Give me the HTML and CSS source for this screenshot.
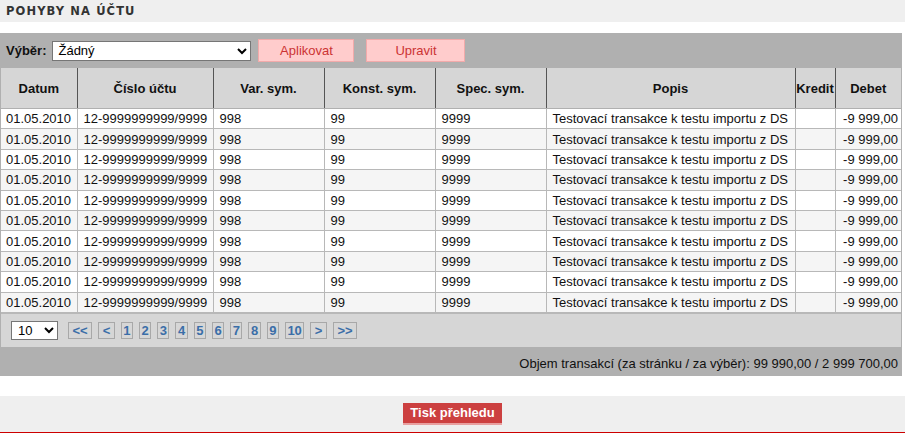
FILE: index.html
```html
<!DOCTYPE html>
<html lang="cs">
<head>
<meta charset="utf-8">
<title>Pohyby na účtu</title>
<link rel="stylesheet" href="styles.css">
</head>
<body>
<div class="page">
  <div class="titlebar"><h2 class="title">POHYBY NA ÚČTU</h2></div>
  <div class="panel">
    <div class="toolbar">
      <label class="tb-label" for="vyber">Výběr:</label>
      <select id="vyber" class="tb-select"><option>Žádný</option></select>
      <button class="btn-pink btn-apply">Aplikovat</button>
      <button class="btn-pink btn-edit">Upravit</button>
    </div>
    <table class="grid">
      <colgroup>
        <col class="c-date"><col class="c-acc"><col class="c-sym"><col class="c-sym"><col class="c-sym"><col class="c-desc"><col class="c-cred"><col class="c-deb">
      </colgroup>
      <thead>
        <tr><th>Datum</th><th>Číslo účtu</th><th>Var. sym.</th><th>Konst. sym.</th><th>Spec. sym.</th><th>Popis</th><th class="th-narrow">Kredit</th><th>Debet</th></tr>
      </thead>
      <tbody>
        <tr><td>01.05.2010</td><td>12-9999999999/9999</td><td>998</td><td>99</td><td>9999</td><td>Testovací transakce k testu importu z DS</td><td></td><td class="num">-9 999,00</td></tr>
        <tr><td>01.05.2010</td><td>12-9999999999/9999</td><td>998</td><td>99</td><td>9999</td><td>Testovací transakce k testu importu z DS</td><td></td><td class="num">-9 999,00</td></tr>
        <tr><td>01.05.2010</td><td>12-9999999999/9999</td><td>998</td><td>99</td><td>9999</td><td>Testovací transakce k testu importu z DS</td><td></td><td class="num">-9 999,00</td></tr>
        <tr><td>01.05.2010</td><td>12-9999999999/9999</td><td>998</td><td>99</td><td>9999</td><td>Testovací transakce k testu importu z DS</td><td></td><td class="num">-9 999,00</td></tr>
        <tr><td>01.05.2010</td><td>12-9999999999/9999</td><td>998</td><td>99</td><td>9999</td><td>Testovací transakce k testu importu z DS</td><td></td><td class="num">-9 999,00</td></tr>
        <tr><td>01.05.2010</td><td>12-9999999999/9999</td><td>998</td><td>99</td><td>9999</td><td>Testovací transakce k testu importu z DS</td><td></td><td class="num">-9 999,00</td></tr>
        <tr><td>01.05.2010</td><td>12-9999999999/9999</td><td>998</td><td>99</td><td>9999</td><td>Testovací transakce k testu importu z DS</td><td></td><td class="num">-9 999,00</td></tr>
        <tr><td>01.05.2010</td><td>12-9999999999/9999</td><td>998</td><td>99</td><td>9999</td><td>Testovací transakce k testu importu z DS</td><td></td><td class="num">-9 999,00</td></tr>
        <tr><td>01.05.2010</td><td>12-9999999999/9999</td><td>998</td><td>99</td><td>9999</td><td>Testovací transakce k testu importu z DS</td><td></td><td class="num">-9 999,00</td></tr>
        <tr><td>01.05.2010</td><td>12-9999999999/9999</td><td>998</td><td>99</td><td>9999</td><td>Testovací transakce k testu importu z DS</td><td></td><td class="num">-9 999,00</td></tr>
      </tbody>
    </table>
    <div class="pager">
      <select class="pg-select"><option>10</option></select>
      <div class="pg-links">
        <a class="pg pg-arrow">&lt;&lt;</a><a class="pg pg-arrow">&lt;</a><a class="pg">1</a><a class="pg">2</a><a class="pg">3</a><a class="pg">4</a><a class="pg">5</a><a class="pg">6</a><a class="pg">7</a><a class="pg">8</a><a class="pg">9</a><a class="pg">10</a><a class="pg pg-arrow">&gt;</a><a class="pg pg-arrow">&gt;&gt;</a>
      </div>
    </div>
    <div class="summary">Objem transakcí (za stránku / za výběr): 99 990,00 / 2 999 700,00</div>
  </div>
  <div class="gap"></div>
  <div class="actions"><button class="btn-red">Tisk přehledu</button></div>
</div>
</body>
</html>
```
FILE: styles.css
```css
html, body {
  margin: 0;
  padding: 0;
  background: #ffffff;
}
body {
  font-family: "Liberation Sans", Arial, sans-serif;
  font-size: 13px;
  color: #111;
}
.page {
  width: 905px;
}
.titlebar {
  background: #efefef;
  height: 22px;
  display: flex;
  align-items: center;
  padding-left: 6px;
  margin-bottom: 11px;
}
.title {
  margin: 0;
  font-family: "DejaVu Sans", Verdana, sans-serif;
  font-size: 11.5px;
  font-weight: bold;
  letter-spacing: 1.1px;
  color: #333;
}
.panel {
  width: 902px;
  background: #b0b0b0;
  box-sizing: border-box;
  padding: 0 1px;
}
.toolbar {
  height: 35px;
  display: flex;
  align-items: center;
  padding-left: 5px;
}
.tb-label {
  font-weight: bold;
  margin-right: 6px;
}
.tb-select {
  width: 199px;
  height: 20px;
  font-family: "Liberation Sans", Arial, sans-serif;
  font-size: 13px;
  margin: 0 7px 0 0;
  padding: 0 1px;
  border: 1px solid #767676;
  border-radius: 0;
  background: #fff;
  color: #000;
}
.btn-pink {
  height: 23px;
  background: #ffcccc;
  border: 1px solid #f2aaaa;
  color: #cc3333;
  font-family: "Liberation Sans", Arial, sans-serif;
  font-size: 13px;
  padding: 0;
  margin: 0;
}
.btn-apply { width: 96px; margin-right: 12px; }
.btn-edit { width: 99px; }
.grid {
  width: 900px;
  table-layout: fixed;
  border-collapse: collapse;
  background: #fff;
}
.c-date { width: 76px; }
.c-acc { width: 136px; }
.c-sym { width: 111px; }
.c-desc { width: 249px; }
.c-cred { width: 40px; }
.c-deb { width: 66px; }
.grid th {
  background: #d6d6d6;
  height: 40px;
  padding: 0;
  font-weight: bold;
  text-align: center;
  border-left: 1px solid #555;
  border-bottom: 1px solid #b0b0b0;
  white-space: nowrap;
  overflow: hidden;
}
.grid th:first-child { border-left: 0; }
.grid td {
  height: 19.4px;
  line-height: 15px;
  padding: 0 3px 0 5px;
  border: 1px solid #b8b8b8;
  white-space: nowrap;
  overflow: hidden;
}
.grid td:first-child { border-left: 0; }
.grid td:last-child { border-right: 0; }
.grid td + td { padding-left: 6px; }
.grid tbody tr:nth-child(even) td { background: #f5f5f5; }
.grid td.num { text-align: right; }
.pager {
  background: #d6d6d6;
  height: 34px;
  display: flex;
  align-items: center;
  padding-left: 10px;
  border-top: 1px solid #b8b8b8;
  box-sizing: border-box;
}
.pg-select {
  width: 47px;
  height: 19px;
  font-family: "Liberation Sans", Arial, sans-serif;
  font-size: 13px;
  border: 1px solid #767676;
  border-radius: 0;
  background: #fff;
  color: #000;
  padding: 0 2px;
  margin: 0 10px 0 0;
}
.pg-links {
  display: flex;
  gap: 6px;
}
.pg {
  display: inline-block;
  height: 15px;
  line-height: 15px;
  padding: 0 1.5px;
  text-align: center;
  border: 1px solid #a8a8a8;
  color: #3b6ea8;
  font-weight: bold;
  font-size: 13px;
}
.pg.pg-arrow {
  padding: 0 3.5px;
}
.summary {
  height: 29px;
  line-height: 33px;
  text-align: right;
  padding-right: 3px;
  color: #111;
}
.gap {
  height: 20px;
}
.actions {
  background: #efefef;
  height: 37px;
  border-bottom: 1px solid #cc0000;
  display: flex;
  justify-content: center;
  align-items: flex-start;
  padding-top: 7px;
  box-sizing: border-box;
}
.btn-red {
  width: 99px;
  height: 22px;
  background: #cc4040;
  color: #fff;
  border: 0;
  border-bottom: 2px solid #e8a0a0;
  font-family: "Liberation Sans", Arial, sans-serif;
  font-size: 13px;
  font-weight: bold;
  padding: 0;
}
```
